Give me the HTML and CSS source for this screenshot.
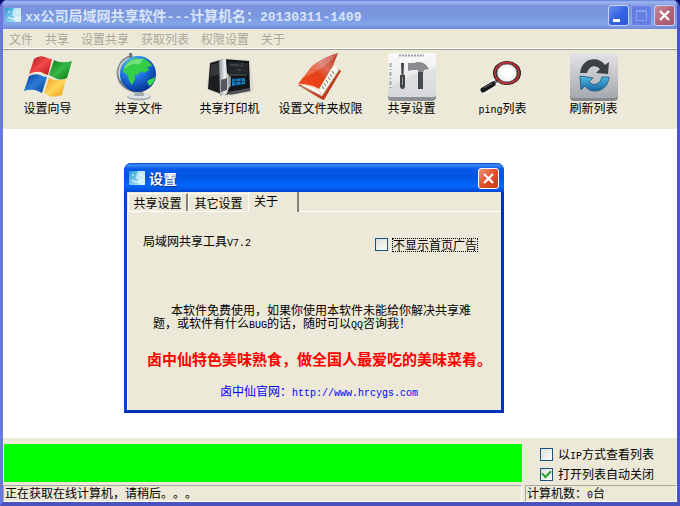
FILE: index.html
```html
<!DOCTYPE html>
<html lang="zh-CN">
<head>
<meta charset="utf-8">
<title>xx公司局域网共享软件</title>
<link rel="stylesheet" href="styles.css">
</head>
<body>
<div class="window">
	<div class="titlebar">
		<svg class="appicon" width="16" height="14" viewBox="0 0 16 14">
			<defs><linearGradient id="face" x2="1" y2="1"><stop offset="0" stop-color="#2a9fd8"/><stop offset="1" stop-color="#c8eefa"/></linearGradient></defs>
			<rect width="16" height="14" rx="1" fill="url(#face)"/>
			<path d="M9 0H15Q16 0 16 1V13Q16 14 15 14H10Q9 10 9 8H7Q7 4 9 0" fill="#e2f6fc" opacity=".7"/>
			<path d="M4 3V5M12 3V5M3 9Q8 13 13 9" fill="none" stroke="#fff"/>
		</svg>
		<div class="caption"><span class="latin">xx</span>公司局域网共享软件<span class="latin">---</span>计算机名：<span class="latin">20130311-1409</span></div>
		<button class="winbtn min" aria-label="最小化"><svg width="19" height="19"><path d="M4 13H11V16H4z" fill="#fff"/></svg></button>
		<button class="winbtn max" aria-label="最大化" disabled><svg width="19" height="19"><path d="M4.500 5V14.500H14.500V5M4 5.500H15M4 4.500H15" fill="none" stroke="#8f9cf0"/></svg></button>
		<button class="winbtn dim" aria-label="关闭"><svg width="19" height="19"><path d="M5 5L14 14M14 5L5 14" stroke="#fff" stroke-width="2.400"/></svg></button>
	</div>
	<div class="menu">
		<button>文件</button><button>共享</button><button>设置共享</button><button>获取列表</button><button>权限设置</button><button>关于</button>
	</div>
	<div class="toolbar">
		<button class="tool">
			<svg width="48" height="48" viewBox="0 0 48 48">
				<defs>
					<linearGradient id="wr" x2="1" y2="1"><stop offset="0" stop-color="#b01018"/><stop offset=".5" stop-color="#f04a48"/><stop offset="1" stop-color="#b81414"/></linearGradient>
					<linearGradient id="wg" x2="1" y2="1"><stop offset="0" stop-color="#0a7c18"/><stop offset=".5" stop-color="#35b844"/><stop offset="1" stop-color="#047010"/></linearGradient>
					<linearGradient id="wb" x2="1" y2="1"><stop offset="0" stop-color="#0a3c98"/><stop offset=".5" stop-color="#2a7cd4"/><stop offset="1" stop-color="#0a3c98"/></linearGradient>
					<linearGradient id="wy" x2="1" y2="1"><stop offset="0" stop-color="#f0941c"/><stop offset=".5" stop-color="#ffd65c"/><stop offset="1" stop-color="#ee9a10"/></linearGradient>
				</defs>
				<path d="M10 6Q15 2 21 4Q25 6 28 6L24 22Q20 21 17 19Q11 18 5 21z" fill="url(#wr)"/>
				<path d="M30 7Q37 11 48 8L43 25Q36 28 31 25L25 22z" fill="url(#wg)"/>
				<path d="M5 23Q11 20 16 22Q20 24 23 24L18 40Q14 38 11 37Q5 36 0 38z" fill="url(#wb)"/>
				<path d="M25 25Q33 29 42 26L38 42Q30 45 25 43L20 40z" fill="url(#wy)"/>
			</svg>
			<span>设置向导</span>
		</button>
		<button class="tool">
			<svg width="48" height="48" viewBox="0 0 48 48">
				<defs>
					<radialGradient id="sea" cx=".35" cy=".25" r=".8"><stop offset="0" stop-color="#72d0ff"/><stop offset=".5" stop-color="#1c72dc"/><stop offset="1" stop-color="#062c8c"/></radialGradient>
				</defs>
				<ellipse cx="24" cy="44" rx="12" ry="3.500" fill="#a9b0b4"/>
				<ellipse cx="24" cy="43" rx="11" ry="2.500" fill="#dfe3e5"/>
				<path d="M21 36H28L29 43H19z" fill="#a3abaf"/>
				<path d="M16 4C4 8 1 20 6 29Q10 35 20 38" fill="none" stroke="#7d868a" stroke-width="4"/>
				<path d="M15 5C5 9 2 18 6 27" fill="none" stroke="#cbd1d3" stroke-width="2"/>
				<path d="M14 0H17L18 5L14 6z" fill="#707a7f"/>
				<circle cx="23" cy="21" r="18" fill="url(#sea)"/>
				<path d="M9 15Q13 6 22 5L25 7L28 5Q34 8 37 13L32 14L34 17L29 20L26 18L22 22L19 22L20 26L17 32Q13 27 13 22L8 19z" fill="#34ce46"/>
				<path d="M32 28L40 24Q39 31 34 33z" fill="#37dc4c"/>
				<path d="M10 13Q17 4 28 6L24 12Q17 9 10 16z" fill="#b0f4b0" opacity=".5"/>
			</svg>
			<span>共享文件</span>
		</button>
		<button class="tool">
			<svg width="48" height="48" viewBox="0 0 48 48">
				<defs>
					<linearGradient id="metal" x2="1"><stop offset="0" stop-color="#8d9194"/><stop offset=".5" stop-color="#f4f4f4"/><stop offset="1" stop-color="#777b7e"/></linearGradient>
				</defs>
				<path d="M0 36L4 9L19 5L44 7L48 37L20 44z" fill="#d8d7d0" opacity=".7"/>
				<path d="M4 10L18 6V42L2 36z" fill="#1b1d1f"/>
				<path d="M5 12L15 9V21L4 24z" fill="#33373a"/>
				<path d="M17 6L43 8L44 36L19 42z" fill="#131517"/>
				<path d="M22 9L42 10V21L22 22z" fill="#25282b"/>
				<path d="M13 8Q16 5 20 6L21 20L25 24V33L23 35L21 41L14 43z" fill="url(#metal)"/>
				<path d="M15 27L21 25V37L15 39z" fill="#55595c"/>
				<path d="M26 26L39 25V31L26 33z" fill="#147dbd"/>
				<path d="M27 28.500H38M30 26V32M35 26V31" stroke="#0a314b"/>
				<path d="M24 12H33M35 14L37 10M32 17H35M24 22H41" stroke="#5a5f62"/>
				<path d="M22 39L43 35L45 38L24 42z" fill="#505457"/>
			</svg>
			<span>共享打印机</span>
		</button>
		<button class="tool">
			<svg width="48" height="48" viewBox="0 0 48 48">
				<defs>
					<linearGradient id="cover" x1="1" x2="0" y2="1"><stop offset="0" stop-color="#b7382c"/><stop offset=".35" stop-color="#dc6c58"/><stop offset=".55" stop-color="#e64018"/><stop offset="1" stop-color="#ee4a1a"/></linearGradient>
				</defs>
				<path d="M1 32L24 46L27 47L44 18L40 15z" fill="#c23a1c"/>
				<path d="M2 31L38 13L42 17L25 43z" fill="#fafaf0"/>
				<path d="M4 33L25 43L42 17" fill="none" stroke="#b5aa98"/>
				<path d="M35 18L37 21M33 21L35 24M31 24L33 27M29 27L31 30M27 30L29 33M25 33L27 36" stroke="#77716a"/>
				<path d="M1 31L15 13Q26 4 41 0L36 13L22 36Q14 31 1 31z" fill="url(#cover)"/>
				<path d="M15 13Q26 4 40 1Q27 16 6 25z" fill="#fff" opacity=".22"/>
				<path d="M1 31Q14 32 22 37L25 43" fill="none" stroke="#fbcbb8"/>
			</svg>
			<span>设置文件夹权限</span>
		</button>
		<button class="tool">
			<svg width="48" height="48" viewBox="0 0 48 48">
				<defs>
					<linearGradient id="pad" y2="1" x2="0"><stop offset="0" stop-color="#fafafa"/><stop offset="1" stop-color="#dedfe1"/></linearGradient>
				</defs>
				<rect y="4" width="48" height="44" rx="4" fill="#8d9094"/>
				<rect width="48" height="44" rx="3" fill="url(#pad)"/>
				<path d="M48 15Q24 18 0 36V44H48z" fill="#c9cbce" opacity=".35"/>
				<path d="M11 2.500H36" stroke="#9b9da0" stroke-width="2" stroke-dasharray="2 1"/>
				<path d="M2.500 10V36" stroke="#a5a7aa" stroke-width="2" stroke-dasharray="4 2 1 2"/>
				<path d="M13 10H16L15.500 22H17V33Q17 36 14.500 36Q12 36 12 33V22H13.500z" fill="#414447"/>
				<path d="M14.500 24V32" stroke="#999" stroke-width="1"/>
				<path d="M20 10H26L29 9Q37 8 41 16L36 17L35 20H30V17H24L20 18z" fill="#898b8e"/>
				<path d="M30 19H35V36H30z" fill="#46494c"/>
			</svg>
			<span>共享设置</span>
		</button>
		<button class="tool">
			<svg width="48" height="48" viewBox="0 0 48 48">
				<path d="M16 29L5 37" stroke="#fff" stroke-width="7" stroke-linecap="round"/>
				<path d="M20 26L14 31" stroke="#77797b" stroke-width="3"/>
				<path d="M14 31L4 37" stroke="#18191b" stroke-width="5" stroke-linecap="round"/>
				<path d="M13 30L5 35" stroke="#777" stroke-width="1"/>
				<ellipse cx="28" cy="20" rx="14" ry="12" fill="#272223"/>
				<ellipse cx="28" cy="20" rx="12" ry="10.500" fill="none" stroke="#d63238" stroke-width="1.500"/>
				<ellipse cx="28" cy="20" rx="10" ry="9" fill="#f3f2ec" stroke="#777" stroke-width="1"/>
				<path d="M21 20Q23 14 29 14Q33 15 35 19L31 25Q25 27 21 20" fill="#fff"/>
			</svg>
			<span><span class="latin">ping</span>列表</span>
		</button>
		<button class="tool">
			<svg width="48" height="48" viewBox="0 0 48 48">
				<defs>
					<linearGradient id="tile" y2="1" x2="0"><stop offset="0" stop-color="#e3e4e7"/><stop offset="1" stop-color="#a5a8ad"/></linearGradient>
					<linearGradient id="arr" y2="1" x2="0"><stop offset="0" stop-color="#53bce8"/><stop offset="1" stop-color="#15649c"/></linearGradient>
				</defs>
				<rect y="4" width="48" height="44" rx="4" fill="#85888d"/>
				<rect width="48" height="45" rx="3" fill="url(#tile)"/>
				<path d="M10 20C12 4 29 3 35 12L39 9L38 21L26 20L30 16C25 11 19 13 17 20z" fill="#3d4145"/>
				<path d="M39 24C38 39 21 42 15 33L11 37L10 23L23 25L19 29C24 34 30 31 32 24z" fill="url(#arr)" stroke="#24668c" stroke-width="1"/>
			</svg>
			<span>刷新列表</span>
		</button>
	</div>
	<div class="list"></div>
	<div class="bottom">
		<div class="progress"></div>
		<div class="checks">
			<label><input type="checkbox"><span>以<span class="latin">IP</span>方式查看列表</span></label>
			<label><input type="checkbox" checked><span>打开列表自动关闭</span></label>
		</div>
	</div>
	<div class="status">
		<div class="cell">正在获取在线计算机，请稍后。。。</div>
		<div class="cell count">计算机数：<span class="latin">0</span>台</div>
	</div>
</div>

<div class="dialog" role="dialog" aria-label="设置">
	<div class="titlebar">
		<svg class="appicon" width="16" height="14" viewBox="0 0 16 14">
			<rect width="16" height="14" rx="1" fill="url(#face)"/>
			<path d="M9 0H15Q16 0 16 1V13Q16 14 15 14H10Q9 10 9 8H7Q7 4 9 0" fill="#e2f6fc" opacity=".7"/>
			<path d="M4 3V5M12 3V5M3 9Q8 13 13 9" fill="none" stroke="#fff"/>
		</svg>
		<div class="caption">设置</div>
		<button class="winbtn close" aria-label="关闭"><svg width="19" height="19"><path d="M5 5L14 14M14 5L5 14" stroke="#fff" stroke-width="2.400"/></svg></button>
	</div>
	<div class="tabs">
		<button>共享设置</button>
		<button>其它设置</button>
		<button class="active">关于</button>
	</div>
	<div class="page">
		<div class="row">
			<div>局域网共享工具<span class="latin">V7.2</span></div>
			<label><input type="checkbox"><span class="focus">不显示首页广告</span></label>
		</div>
		<p class="about">本软件免费使用，如果你使用本软件未能给你解决共享难题，或软件有什么<span class="latin">BUG</span>的话，随时可以<span class="latin">QQ</span>咨询我！</p>
		<p class="ad">卤中仙特色美味熟食，做全国人最爱吃的美味菜肴。</p>
		<a class="site" href="http://www.hrcygs.com">卤中仙官网：<span class="latin">http://www.hrcygs.com</span></a>
	</div>
</div>
</body>
</html>
```
FILE: styles.css
```css
* { box-sizing:border-box; }
body { margin:0; background:#000c68; font:12px/14px "Noto Sans CJK SC", sans-serif; color:#000; text-spacing-trim:space-all; }
button { font:inherit; color:inherit; background:none; border:0; padding:0; }
svg { display:block; }
.latin { font-family:"Liberation Mono", monospace; font-size:10px; line-height:10px; }

.window { display:flex; flex-direction:column; height:100vh; border:solid #6878dc; border-width:0 3px 4px 3px; border-right-color:#4a55c8; border-bottom-color:#4a52bd; border-radius:7px 7px 0 0; background:#ece9d8; overflow:hidden; }
.titlebar { display:flex; align-items:center; flex:none; height:29px; gap:2px; color:#d8e4f8; font-size:14px; font-weight:bold; }
.window > .titlebar { margin:0 -3px; padding:1px 5px 0 5px; background:linear-gradient(#5f7ed8, #a0b8f0 2px, #7b93dd 6px, #7a96df 15px, #82a5e8 24px, #7289d8); }
.titlebar .latin { font-size:13px; }
.caption { flex:1; padding-left:2px; line-height:18px; white-space:nowrap; }

.winbtn { width:21px; height:21px; border:1px solid #c6d2f6; border-radius:3px; }
.min { background:linear-gradient(135deg, #6f8ff0, #3464e4 50%, #2b56d4); }
.max { background:#657fe0; border-color:#8fa3ec; }
.dim { background:linear-gradient(135deg, #c48e9e, #b56478 50%, #a25670); }
.close { background:linear-gradient(135deg, #f0957a, #e2502c 50%, #c83a10); border-color:#fff; }

.menu { display:flex; gap:12px; flex:none; height:20px; padding:0 6px; color:#aca899; border-bottom:1px solid #fff; }
.toolbar { display:flex; flex:none; height:80px; padding-top:3px; border-top:1px solid #9d9d8c; }
.tool { display:flex; flex-direction:column; align-items:center; justify-content:flex-start; width:91px; padding-right:2px; white-space:nowrap; }
.list { flex:1; background:#fff; }

.bottom { display:flex; flex:none; gap:18px; padding:6px 19px 0 1px; }
.progress { flex:1; height:38px; background:#0f0; }
.checks { display:flex; flex-direction:column; justify-content:space-between; width:118px; padding:3px 0 1px; white-space:nowrap; }
label { display:flex; align-items:center; gap:5px; }
input { appearance:none; display:grid; flex:none; place-items:center; width:13px; height:13px; margin:0; border:1px solid #1c5180; background:linear-gradient(135deg, #dcdcd7, #fff); }
input:checked::after { content:""; width:7px; height:4px; margin-bottom:2px; border:solid #21a121; border-width:0 0 2px 2px; transform:rotate(-45deg); }

.status { display:flex; flex:none; gap:3px; padding-top:3px; }
.cell { flex:1; height:17px; padding-left:1px; border:1px solid #aca899; border-right-color:#fff; border-bottom-color:#fff; white-space:nowrap; }
.count { flex:none; width:152px; }

.dialog { position:absolute; left:124px; top:163px; width:380px; border:solid #0842d0; border-width:0 3px 3px 3px; border-right-color:#0032b8; border-bottom-color:#0032b8; border-radius:7px 7px 0 0; background:#ece9d8; }
.dialog > .titlebar { margin:0 -3px; padding:1px 5px 0 5px; color:#fff; border-radius:7px 7px 0 0; background:linear-gradient(#0a4ccc, #3a8cfc 2px, #0858e6 6px, #0054e3 14px, #0366fc 23px, #0048d0); }
.dialog .caption { text-shadow:1px 1px #0a2c8c; }
.tabs { display:flex; align-items:flex-end; height:20px; padding-left:1px; border-bottom:1px solid #fff; }
.tabs button { width:60px; height:18px; border:1px solid #fff; border-width:1px 2px 0 1px; border-right-color:#858375; }
.tabs button:nth-child(2) { border-right:0; }
.tabs .active { width:51px; height:20px; margin-bottom:-1px; padding:0 14px 3px 0; background:#ece9d8; border-width:0 2px 0 1px; }

.page { display:flex; flex-direction:column; height:198px; border-left:1px solid #fff; }
.row { display:flex; justify-content:space-between; padding:22px 24px 0 15px; }
.row label { padding-top:4px; }
.focus { line-height:12px; outline:1px dotted #000; }
.about { width:324px; margin:52px 0 0 25px; line-height:13px; text-indent:18px; }
.ad { margin:18px 0 0 19px; color:#f00; font-size:15px; line-height:20px; font-weight:bold; white-space:nowrap; }
.site { align-self:flex-start; margin:15px 0 0 92px; color:#00f; text-decoration:none; }
```
